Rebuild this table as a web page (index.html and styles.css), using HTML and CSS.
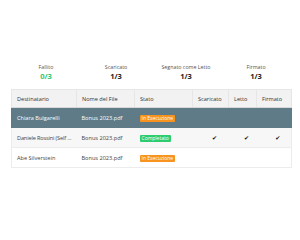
FILE: index.html
```html
<!DOCTYPE html>
<html>
<head>
<meta charset="utf-8">
<link rel="stylesheet" href="styles.css">
</head>
<body>
<div class="wrap">
  <div class="stats">
    <div class="stat"><div class="label">Fallito</div><div class="value green">0/3</div></div>
    <div class="stat"><div class="label">Scaricato</div><div class="value">1/3</div></div>
    <div class="stat"><div class="label">Segnato come Letto</div><div class="value">1/3</div></div>
    <div class="stat"><div class="label">Firmato</div><div class="value">1/3</div></div>
  </div>
  <table class="grid">
    <colgroup>
      <col class="c1"><col class="c2"><col class="c3"><col class="c4"><col class="c5"><col class="c6">
    </colgroup>
    <thead>
      <tr><th>Destinatario</th><th>Nome del File</th><th>Stato</th><th>Scaricato</th><th>Letto</th><th>Firmato</th></tr>
    </thead>
    <tbody>
      <tr class="sel"><td>Chiara Bulgarelli</td><td>Bonus 2023.pdf</td><td><span class="badge orange">In Esecuzione</span></td><td></td><td></td><td></td></tr>
      <tr class="alt"><td class="tight">Daniele Rossini (Self ...</td><td>Bonus 2023.pdf</td><td><span class="badge green-bg">Completato</span></td><td class="chk">✔</td><td class="chk">✔</td><td class="chk">✔</td></tr>
      <tr><td>Abe Silverstein</td><td>Bonus 2023.pdf</td><td><span class="badge orange">In Esecuzione</span></td><td></td><td></td><td></td></tr>
    </tbody>
  </table>
</div>
</body>
</html>
```
FILE: styles.css
```css
html, body { margin: 0; padding: 0; background: #fff; }
body { font-family: "Open Sans", "DejaVu Sans", sans-serif; color: #333; }
.wrap { padding: 63px 9px 0 11px; }
.stats { display: grid; grid-template-columns: repeat(4, 1fr); text-align: center; }
.label { font-size: 5.3px; color: #555; line-height: 8px; }
.value { font-size: 7.5px; font-weight: 700; color: #222; line-height: 10px; }
.value.green { color: #2ecc71; }
.grid { margin-top: 8px; width: 280px; border-collapse: collapse; table-layout: fixed; font-size: 5.6px; }
.c1 { width: 65px; } .c2 { width: 58px; } .c3 { width: 58px; } .c4 { width: 36px; } .c5 { width: 28px; } .c6 { width: 35px; }
th { background: #f2f2f2; font-weight: 400; text-align: left; height: 17px; padding: 0 0 0 5px; border: 1px solid #e6e6e6; border-bottom: 1px solid #d8d8d8; color: #333; }
td { height: 19px; padding: 0 0 0 5px; border-bottom: 1px solid #ececec; white-space: nowrap; overflow: hidden; color: #444; }
td.tight { letter-spacing: -0.15px; }
tbody td:first-child { border-left: 1px solid #ececec; }
tbody td:last-child { border-right: 1px solid #ececec; }
tr.sel td { background: #5e7b87; color: #fff; border-color: #5e7b87; }
tr.alt td { background: #f7f7f7; }
.badge { display: inline-block; font-size: 5px; color: #fff; padding: 0 2px; line-height: 7px; border-radius: 1px; }
.orange { background: #f7931e; }
.green-bg { background: #2ecc71; }
.chk { text-align: center; padding: 0 0 0 8px; font-size: 6px; color: #111; }
```
